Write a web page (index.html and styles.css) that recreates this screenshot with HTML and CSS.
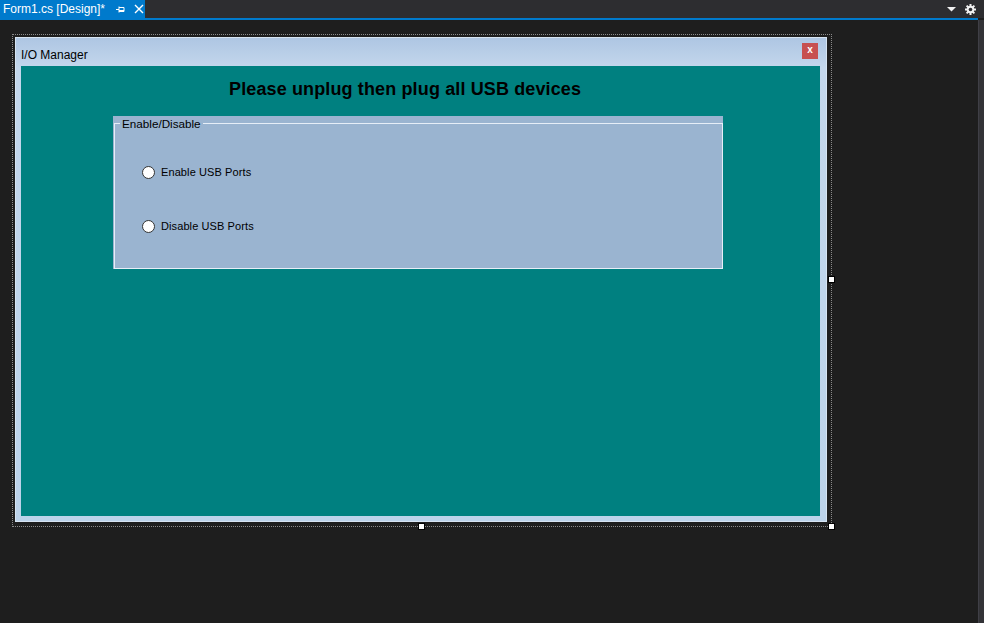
FILE: index.html
```html
<!DOCTYPE html>
<html>
<head>
<meta charset="utf-8">
<link rel="stylesheet" href="styles.css">
</head>
<body>
<div class="ide">
  <div class="tabstrip">
    <div class="tab">
      <span class="tab-title">Form1.cs [Design]*</span>
      <svg class="pin" width="9" height="9" viewBox="0 0 9 9"><path d="M0 4.5H3M3 1.5V7.5M3 2.5H8V6.5H3M3 5.5H8" stroke="#fff" stroke-width="1" fill="none"/></svg>
      <svg class="close" width="10" height="10" viewBox="0 0 10 10"><path d="M1 1L9 9M9 1L1 9" stroke="#fff" stroke-width="1.4"/></svg>
    </div>
    <div class="strip-fill"></div>
    <div class="strip-tools">
      <svg width="9" height="6" viewBox="0 0 9 6"><path d="M0 1H9L4.5 5.5Z" fill="#f1f1f1"/></svg>
      <svg width="11" height="11" viewBox="0 0 11 11"><g fill="#f1f1f1"><circle cx="5.5" cy="5.5" r="3.8"/><rect x="4.5" y="0" width="2" height="11"/><rect x="0" y="4.5" width="11" height="2"/><rect x="4.5" y="0" width="2" height="11" transform="rotate(45 5.5 5.5)"/><rect x="4.5" y="0" width="2" height="11" transform="rotate(-45 5.5 5.5)"/></g><circle cx="5.5" cy="5.5" r="1.8" fill="#2d2d30"/></svg>
    </div>
  </div>
  <div class="tabline"></div>
  <div class="main">
    <div class="surface">
      <div class="selection">
        <div class="form">
          <div class="titlebar">
            <span class="form-title">I/O Manager</span>
            <span class="form-close">x</span>
          </div>
          <div class="client">
            <h1 class="heading">Please unplug then plug all USB devices</h1>
            <div class="group">
              <fieldset class="groupbox">
                <legend>Enable/Disable</legend>
                <label class="radio"><span class="dot"></span>Enable USB Ports</label>
                <label class="radio"><span class="dot"></span>Disable USB Ports</label>
              </fieldset>
            </div>
          </div>
        </div>
        <span class="handle h-right"></span>
        <span class="handle h-bottom"></span>
        <span class="handle h-corner"></span>
      </div>
    </div>
    <div class="scrollstrip"></div>
  </div>
</div>
</body>
</html>
```
FILE: styles.css
```css
html, body {
  margin: 0;
  padding: 0;
  background: #1e1e1e;
  font-family: "Liberation Sans", "Noto Sans", sans-serif;
}
.ide {
  width: 984px;
  height: 623px;
  display: flex;
  flex-direction: column;
  overflow: hidden;
}
.tabstrip {
  height: 18px;
  display: flex;
  background: #2d2d30;
}
.tab {
  width: 145px;
  background: #007acc;
  display: flex;
  align-items: center;
  color: #fff;
  font-size: 12px;
  padding-left: 3px;
  box-sizing: border-box;
}
.tab-title {
  line-height: 18px;
  white-space: nowrap;
}
.pin {
  margin-left: 11px;
}
.close {
  margin-left: 9px;
}
.strip-fill {
  flex: 1;
}
.strip-tools {
  display: flex;
  align-items: center;
  gap: 9px;
  padding-right: 8px;
}
.tabline {
  height: 2px;
  background: #007acc;
  margin-right: 6px;
}
.main {
  flex: 1;
  display: flex;
}
.surface {
  flex: 1;
  padding: 14px 0 0 12px;
}
.scrollstrip {
  width: 5px;
  background: #333337;
  border-left: 1px solid #3f3f46;
}
.selection {
  position: relative;
  width: 814px;
  height: 487px;
  border: 1px dotted #8a8a8a;
  padding: 2px;
}
.form {
  width: 812px;
  height: 485px;
  box-sizing: border-box;
  background: linear-gradient(to bottom, #aec6e3 0px, #c4d7ec 30px, #bcd3ea 100%);
  border: 1px solid #d6e4f2;
  display: flex;
  flex-direction: column;
}
.titlebar {
  height: 28px;
  display: flex;
  align-items: center;
  justify-content: space-between;
  padding: 0 8px 0 5px;
}
.form-title {
  font-size: 12px;
  color: #000;
  margin-top: 5px;
}
.form-close {
  width: 16px;
  height: 16px;
  background: #c75050;
  color: #fff;
  font-size: 10px;
  font-weight: bold;
  line-height: 14px;
  text-align: center;
  margin-top: -3px;
}
.client {
  flex: 1;
  background: #008080;
  margin: 0 6px 5px 5px;
  padding-top: 11px;
}
.heading {
  margin: 0 0 0 208px;
  font-size: 18px;
  font-weight: bold;
  line-height: 24px;
  letter-spacing: 0.13px;
  color: #000;
}
.group {
  margin: 15px 0 0 92px;
  width: 610px;
  height: 153px;
  background: #9ab4d0;
  display: flex;
}
.groupbox {
  flex: 1;
  margin: 0 0 0 1px;
  padding: 0 0 0 27px;
  border: 1px solid #e6eef7;
  display: flex;
  flex-direction: column;
  gap: 40px;
}
.groupbox legend {
  font-size: 11.7px;
  color: #000;
  margin-left: -22px;
  padding: 0 2px;
  line-height: 15px;
}
.radio {
  display: flex;
  align-items: center;
  gap: 6px;
  font-size: 11px;
  letter-spacing: 0.1px;
  color: #000;
  height: 14px;
}
.groupbox .radio:first-of-type {
  margin-top: 34px;
}
.dot {
  width: 11px;
  height: 11px;
  border-radius: 50%;
  background: #fff;
  border: 1px solid #333;
}
.handle {
  position: absolute;
  width: 5px;
  height: 5px;
  background: #fff;
  border: 1px solid #000;
}
.h-right {
  right: -4px;
  top: 241px;
}
.h-bottom {
  left: 405px;
  bottom: -4px;
}
.h-corner {
  right: -4px;
  bottom: -4px;
}
```
